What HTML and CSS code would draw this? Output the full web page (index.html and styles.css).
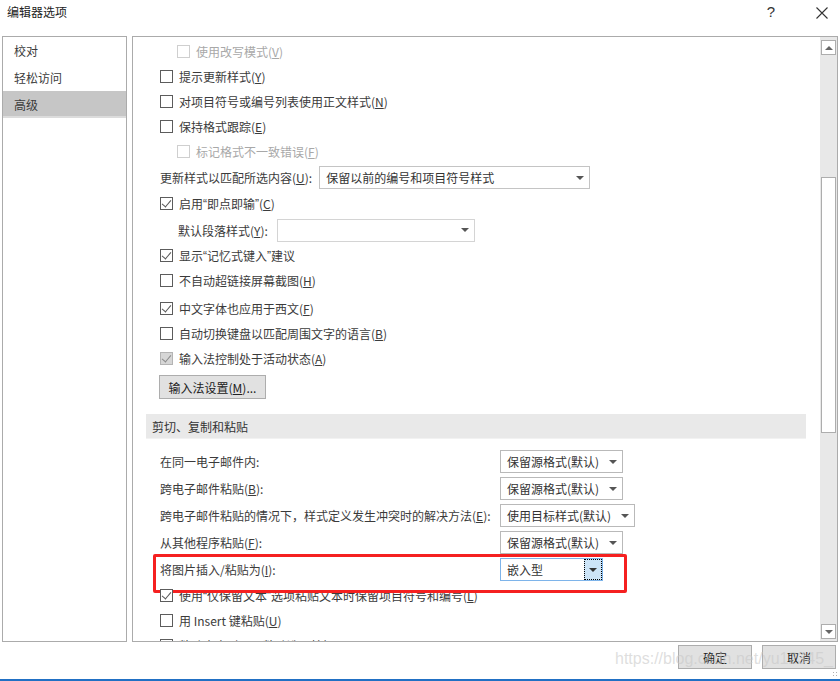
FILE: index.html
```html
<!DOCTYPE html>
<html lang="zh-CN">
<head>
  <meta charset="UTF-8"/>
  <title>编辑器选项</title>
  <link rel="stylesheet" href="styles.css"/>
</head>
<body>
  <div class="dialog">
    <header class="titlebar">
      <span class="title">编辑器选项</span>
      <span class="help">?</span>
      <svg class="close" width="12" height="12" viewBox="0 0 12 12">
        <path d="M0.5 0.5 L11.5 11.5 M11.5 0.5 L0.5 11.5" stroke="#333" stroke-width="1.1" fill="none"/>
      </svg>
    </header>

    <div class="body">
      <nav class="sidenav">
        <div class="nav-item">校对</div>
        <div class="nav-item">轻松访问</div>
        <div class="nav-item active">高级</div>
      </nav>

      <section class="panel">
        <div class="content">
          <label class="opt indent disabled"><span class="cb"></span>使用改写模式(<u>V</u>)</label>
          <label class="opt"><span class="cb"></span>提示更新样式(<u>Y</u>)</label>
          <label class="opt"><span class="cb"></span>对项目符号或编号列表使用正文样式(<u>N</u>)</label>
          <label class="opt"><span class="cb"></span>保持格式跟踪(<u>E</u>)</label>
          <label class="opt indent disabled"><span class="cb"></span>标记格式不一致错误(<u>F</u>)</label>

          <div class="opt sel-row">
            <span>更新样式以匹配所选内容(<u>U</u>):</span>
            <div class="dropdown wide"><span>保留以前的编号和项目符号样式</span><i class="arrow"></i></div>
          </div>
          <label class="opt"><span class="cb checked"></span>启用<span class="q">“</span>即点即输<span class="q">”</span>(<u>C</u>)</label>
          <div class="opt sel-row para">
            <span>默认段落样式(<u>Y</u>):</span>
            <div class="dropdown para-dd"><span></span><i class="arrow"></i></div>
          </div>
          <label class="opt"><span class="cb checked"></span>显示<span class="q">“</span>记忆式键入<span class="q">”</span>建议</label>
          <label class="opt"><span class="cb"></span>不自动超链接屏幕截图(<u>H</u>)</label>

          <label class="opt group"><span class="cb checked"></span>中文字体也应用于西文(<u>F</u>)</label>
          <label class="opt"><span class="cb"></span>自动切换键盘以匹配周围文字的语言(<u>B</u>)</label>
          <label class="opt"><span class="cb checked grayed"></span>输入法控制处于活动状态(<u>A</u>)</label>
          <button class="btn ime">输入法设置(<u>M</u>)...</button>

          <h4 class="section">剪切、复制和粘贴</h4>

          <div class="opt paste">
            <span class="lbl">在同一电子邮件内:</span>
            <div class="dropdown"><span>保留源格式(默认)</span><i class="arrow"></i></div>
          </div>
          <div class="opt paste">
            <span class="lbl">跨电子邮件粘贴(<u>B</u>):</span>
            <div class="dropdown"><span>保留源格式(默认)</span><i class="arrow"></i></div>
          </div>
          <div class="opt paste">
            <span class="lbl">跨电子邮件粘贴的情况下，样式定义发生冲突时的解决方法(<u>E</u>):</span>
            <div class="dropdown target"><span>使用目标样式(默认)</span><i class="arrow"></i></div>
          </div>
          <div class="opt paste">
            <span class="lbl">从其他程序粘贴(<u>F</u>):</span>
            <div class="dropdown"><span>保留源格式(默认)</span><i class="arrow"></i></div>
          </div>
          <div class="opt paste marked">
            <span class="lbl">将图片插入/粘贴为(<u>I</u>):</span>
            <div class="dropdown focused"><span>嵌入型</span><i class="arrow-btn"><i class="arrow"></i></i></div>
          </div>
          <label class="opt"><span class="cb checked"></span>使用<span class="q">“</span>仅保留文本<span class="q">”</span>选项粘贴文本时保留项目符号和编号(<u>L</u>)</label>
          <label class="opt"><span class="cb"></span>用 Insert 键粘贴(<u>U</u>)</label>
          <label class="opt"><span class="cb"></span>粘贴内容时显示粘贴选项按钮(<u>O</u>)</label>
        </div>

        <div class="scrollbar">
          <div class="sb-btn"><i class="tri up"></i></div>
          <div class="sb-gap"></div>
          <div class="sb-thumb"></div>
          <div class="sb-rest"></div>
          <div class="sb-btn"><i class="tri down"></i></div>
        </div>
      </section>
    </div>

    <footer class="footer">
      <button class="btn action">确定</button>
      <button class="btn action">取消</button>
      <span class="watermark">https://blog.csdn.net/yu12345_</span>
      <span class="grip"></span>
    </footer>
  </div>
</body>
</html>
```

FILE: styles.css
```css
:root {
  --border:     #ababab;
  --text:       #3b3b3b;
  --disabled:   #a8a8a8;
  --btn-bg:     #e1e1e1;
  --btn-border: #adadad;
  --font:       "Noto Sans CJK SC", "Microsoft YaHei", sans-serif;
}

* {
  box-sizing: border-box;
  margin: 0;
  padding: 0;
}

body {
  width: 840px;
  height: 681px;
  background: #fff;
  color: var(--text);
  font-family: var(--font);
  font-size: 12px;
  overflow: hidden;
}

u { text-decoration: underline; text-underline-offset: 1px; }

/* narrow latin quotes, like the original UI font */
.q { font-family: "Liberation Sans", sans-serif; }

.dialog {
  height: 681px;
  display: flex;
  flex-direction: column;
  border-bottom: 2px solid #2170c4;
}

/* Title bar */
.titlebar {
  height: 36px;
  display: flex;
  align-items: flex-start;
  padding: 3px 12px 0 7px;
}
.title { flex: 1; color: #222; line-height: 18px; }
.help {
  font-family: "Liberation Sans", sans-serif;
  font-size: 15px;
  color: #333;
  line-height: 18px;
  margin-right: 41px;
}
.close { margin-top: 4px; }

/* Body: side nav + panel */
.body {
  height: 606px;
  display: flex;
  gap: 5px;
  padding: 0 2px;
}

.sidenav {
  width: 125px;
  border: 1px solid var(--border);
}
.nav-item {
  height: 27px;
  line-height: 27px;
  padding-left: 11px;
}
.nav-item.active {
  background: #c6c6c6;
  border-bottom: 2px solid #dcdcdc;
}

.panel {
  flex: 1;
  display: flex;
  border: 1px solid var(--border);
  overflow: hidden;
}

.content {
  flex: 1;
  padding: 2px 14px 0 13px;
  overflow: hidden;
}

/* Option rows */
.opt {
  height: 25px;
  display: flex;
  align-items: center;
  padding-left: 14px;
  white-space: nowrap;
}
.opt.indent   { padding-left: 31px; }
.opt.disabled { color: var(--disabled); }
.opt.group    { margin-top: 3px; }

.cb {
  width: 13px;
  height: 13px;
  border: 1px solid #5c5c5c;
  background: #fff;
  margin-right: 6px;
  flex-shrink: 0;
  position: relative;
}
.disabled .cb { border-color: #cfcfcf; }
.cb.checked::after {
  content: "";
  position: absolute;
  left: 3px;
  top: 0px;
  width: 4px;
  height: 8px;
  border: solid #555;
  border-width: 0 1px 1px 0;
  transform: rotate(40deg);
}
.cb.grayed {
  background: #d6d6d6;
  border-color: #b4b4b4;
}
.cb.grayed::after { border-color: #8a8a8a; }

/* Rows with a dropdown */
.sel-row       { height: 27px; gap: 7px; }
.sel-row.para  { height: 28px; padding-left: 32px; gap: 9px; margin-bottom: -1px; }

.dropdown {
  height: 23px;
  border: 1px solid #b9b9b9;
  background: #fff;
  display: flex;
  align-items: center;
  padding-left: 6px;
  color: #333;
}
.dropdown span { flex: 1; }
.dropdown .arrow { margin: 0 5px 0 8px; }
.dropdown.wide   { width: 271px; border-color: #c4c4c4; }
.dropdown.para-dd { width: 198px; border-color: #d4d4d4; }

.arrow {
  display: block;
  width: 0;
  height: 0;
  border-left: 4px solid transparent;
  border-right: 4px solid transparent;
  border-top: 4px solid #555;
}

/* Buttons */
.btn {
  font-family: var(--font);
  font-size: 12px;
  color: #222;
  background: var(--btn-bg);
  border: 1px solid var(--btn-border);
}
.btn.ime {
  display: block;
  width: 107px;
  height: 24px;
  margin: 4px 0 0 13px;
}

/* Section header */
.section {
  margin-top: 15px;
  height: 25px;
  line-height: 25px;
  padding-left: 6px;
  background: #e9e9e9;
  border-bottom: 1px solid #f2f2f2;
  font-weight: normal;
  font-size: 12px;
  color: #333;
}

/* Paste section */
.section + .opt { margin-top: 9px; }
.opt.paste { height: 27px; }
.paste .lbl { width: 340px; flex-shrink: 0; }
.paste .dropdown { width: 123px; }
.paste .dropdown.target { width: 135px; }

.opt.marked { position: relative; }
.opt.marked::after {
  content: "";
  position: absolute;
  left: 7px;
  top: -2px;
  width: 468px;
  height: 33px;
  border: 3px solid #f52020;
  border-radius: 2px;
}

.dropdown.focused {
  width: 103px;
  border-color: #7eb4ea;
  padding-right: 0;
}
.arrow-btn {
  width: 18px;
  height: 21px;
  background: #cce4f7;
  border: 1px dotted #000;
  display: flex;
  align-items: center;
  justify-content: center;
}
.arrow-btn .arrow { margin: 0; border-top-color: #333; }

/* Scrollbar */
.scrollbar {
  width: 17px;
  display: flex;
  flex-direction: column;
  background: #e8e8e8;
  padding: 3px 1px 2px 1px;
}
.sb-btn {
  height: 15px;
  background: #fff;
  border: 1px solid #adadad;
  display: flex;
  align-items: center;
  justify-content: center;
}
.sb-gap  { height: 122px; }
.sb-thumb {
  height: 256px;
  background: #fff;
  border: 1px solid #adadad;
}
.sb-rest { flex: 1; }
.tri {
  width: 0;
  height: 0;
  border-left: 4px solid transparent;
  border-right: 4px solid transparent;
}
.tri.up   { border-bottom: 4px solid #666; }
.tri.down { border-top: 4px solid #666; }

/* Footer */
.footer {
  flex: 1;
  position: relative;
  display: flex;
  justify-content: flex-end;
  align-items: flex-start;
  gap: 10px;
  padding: 3px 4px 0 0;
}
.btn.action {
  width: 74px;
  height: 24px;
}
.watermark {
  position: absolute;
  left: 615px;
  top: 8px;
  font-family: "Liberation Sans", sans-serif;
  font-size: 16px;
  color: rgba(200, 200, 200, 0.6);
  pointer-events: none;
}
.grip {
  position: absolute;
  right: 2px;
  bottom: 2px;
  width: 6px;
  height: 6px;
  background-image: radial-gradient(#b0b0b0 40%, transparent 45%);
  background-size: 3px 3px;
}
```
